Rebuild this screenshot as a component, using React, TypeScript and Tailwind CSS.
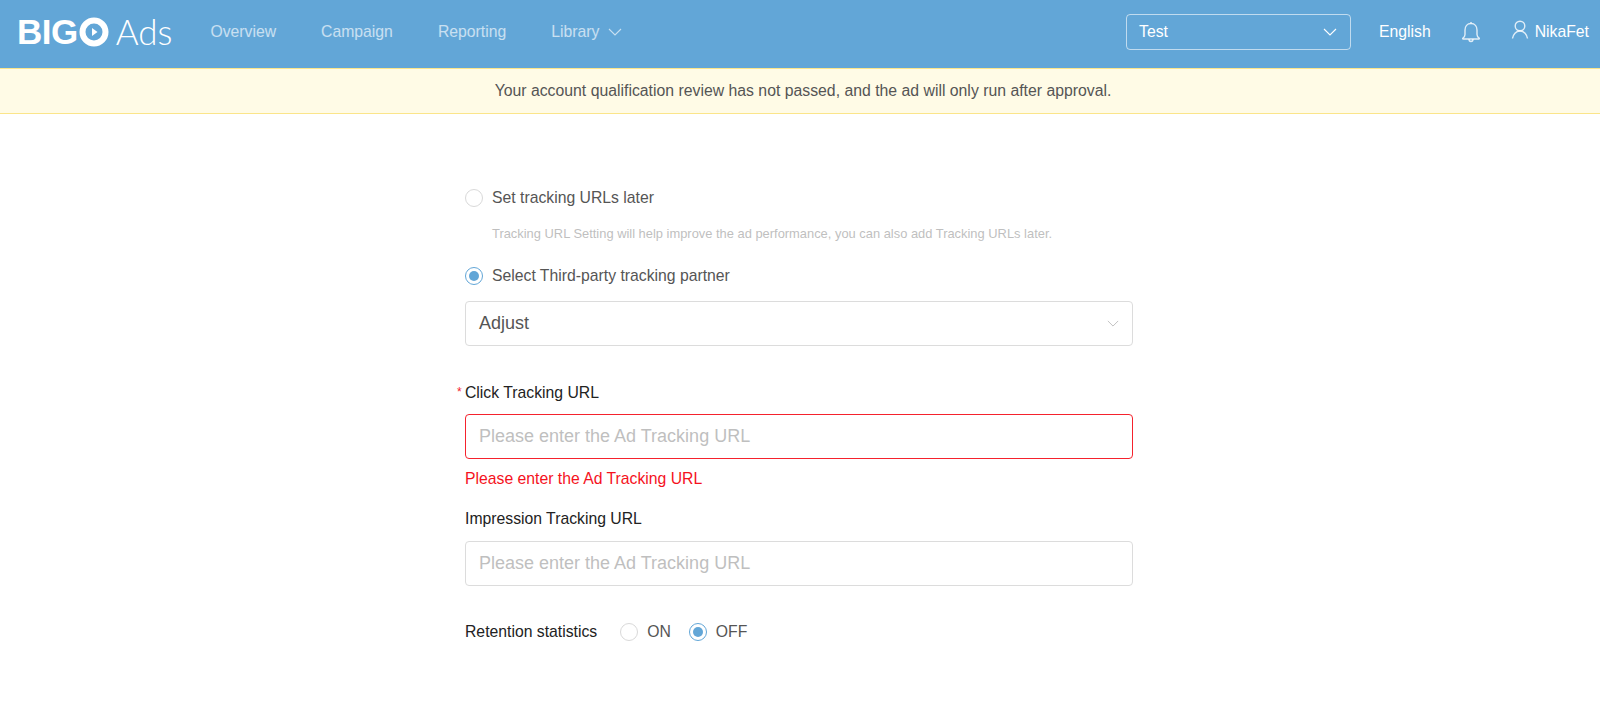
import React from 'react';

const Chevron = ({ className }: { className?: string }) => (
  <svg viewBox="0 0 14 8" fill="none" stroke="currentColor" strokeWidth="1.1" className={className}>
    <path d="M1 1l6 6 6-6" />
  </svg>
);

const Radio = ({ checked }: { checked?: boolean }) => (
  <span
    className={`flex h-[18px] w-[18px] shrink-0 items-center justify-center rounded-full border ${
      checked ? 'border-[#62a6d7]' : 'border-[#d9d9d9]'
    }`}
  >
    {checked && <span className="h-[10px] w-[10px] rounded-full bg-[#62a6d7]" />}
  </span>
);

const Logo = () => (
  <div className="flex items-center">
    <span className="text-[35px] leading-none font-bold tracking-[-0.5px] text-white">BIG</span>
    <svg viewBox="0 0 30 30" className="ml-[1px] h-[30px] w-[30px]">
      <circle cx="15" cy="15" r="11.5" fill="none" stroke="#fff" strokeWidth="6" />
      <path d="M13 11l5.500 4-5.500 4z" fill="#fff" />
    </svg>
    <span className="ml-[7px] font-['Lato',sans-serif] text-[35px] leading-none font-light text-white">Ads</span>
  </div>
);

const TrackingInput = ({ error }: { error?: boolean }) => (
  <input
    placeholder="Please enter the Ad Tracking URL"
    className={`block h-[45px] w-full rounded-[4px] border px-[13px] text-[18px] outline-none placeholder:text-[#bfbfbf] ${
      error ? 'border-[#f5222d]' : 'border-[#dcdcdc]'
    }`}
  />
);

export default function App() {
  return (
    <div className="min-h-[726px] bg-white font-['Liberation_Sans',Arial,sans-serif] text-[15.75px]">
      {/* Top nav */}
      <header className="flex h-[68px] items-center bg-[#62a6d7] pb-[5px] pl-[17px] pr-[11px]">
        <Logo />
        <nav className="ml-[38px] flex items-center gap-[45px] text-white/65">
          <span>Overview</span>
          <span>Campaign</span>
          <span>Reporting</span>
          <span className="flex items-center gap-[9px]">
            Library
            <Chevron className="h-[8px] w-[14px]" />
          </span>
        </nav>
        <div className="ml-auto flex items-center text-white">
          <div className="flex h-[36px] w-[225px] items-center justify-between rounded-[4px] border border-white/60 pl-[12px] pr-[13px]">
            Test
            <Chevron className="h-[8px] w-[14px]" />
          </div>
          <span className="ml-[28px]">English</span>
          <svg viewBox="0 0 20 22" fill="none" stroke="currentColor" strokeWidth="1.4" className="ml-[30px] h-[22px] w-[20px] text-white/80">
            <path d="M10 2.500c-3.800 0-6 2.800-6 6.500v4.500c0 1.700-1 2.800-2.200 3.700-.3.300-.1.800.3.800h15.800c.4 0 .6-.5.3-.8C16.900 16.300 16 15.200 16 13.500V9c0-3.700-2.200-6.500-6-6.500z" />
            <path d="M10 1v1.500M8 18c0 1.500.8 2.500 2 2.500s2-1 2-2.500" />
          </svg>
          <svg viewBox="0 0 18 20" fill="none" stroke="currentColor" strokeWidth="1.4" className="mb-[3px] ml-[30px] h-[20px] w-[18px] text-white/80">
            <circle cx="9" cy="6" r="4.800" />
            <path d="M1.500 18.500c.6-4 3.500-7.500 7.500-7.500s6.900 3.500 7.500 7.500" />
          </svg>
          <span className="ml-[6px]">NikaFet</span>
        </div>
      </header>

      {/* Qualification notice */}
      <div className="flex h-[46px] items-center justify-center border-y border-[#fbe58a] bg-[#fffbe6] pl-[6px] text-[15.8px] text-[#555]">
        Your account qualification review has not passed, and the ad will only run after approval.
      </div>

      {/* Tracking form */}
      <main className="ml-[465px] w-[668px] pt-[74px]">
        <label className="flex h-[20px] items-center gap-[9px] text-[#555]">
          <Radio />
          Set tracking URLs later
        </label>
        <p className="mt-[17px] pl-[27px] text-[12.9px] leading-[18px] text-[#bfbfbf]">
          Tracking URL Setting will help improve the ad performance, you can also add Tracking URLs later.
        </p>
        <label className="mt-[23px] flex h-[20px] items-center gap-[9px] text-[#555]">
          <Radio checked />
          Select Third-party tracking partner
        </label>

        <div className="mt-[15px] flex h-[45px] items-center justify-between rounded-[4px] border border-[#dcdcdc] pl-[13px] pr-[13px] text-[18px] text-[#555]">
          Adjust
          <Chevron className="h-[7px] w-[12px] text-[#bfbfbf]" />
        </div>

        <div className="relative mt-[37px] h-[20px] leading-[20px] text-[#222]">
          <span className="absolute left-[-8px] top-[-1px] text-[12px] text-[#f5222d]">*</span>
          Click Tracking URL
        </div>
        <div className="mt-[11px]">
          <TrackingInput error />
        </div>
        <p className="mt-[10px] h-[20px] leading-[20px] text-[#f5121d]">Please enter the Ad Tracking URL</p>

        <div className="mt-[20px] h-[20px] leading-[20px] text-[#222]">Impression Tracking URL</div>
        <div className="mt-[12px]">
          <TrackingInput />
        </div>

        <div className="mt-[36px] flex h-[20px] items-center text-[#222]">
          <span>Retention statistics</span>
          <span className="ml-[23px] flex items-center gap-[9px] text-[#555]">
            <Radio />
            ON
          </span>
          <span className="ml-[18px] flex items-center gap-[9px] text-[#555]">
            <Radio checked />
            OFF
          </span>
        </div>
      </main>
    </div>
  );
}
